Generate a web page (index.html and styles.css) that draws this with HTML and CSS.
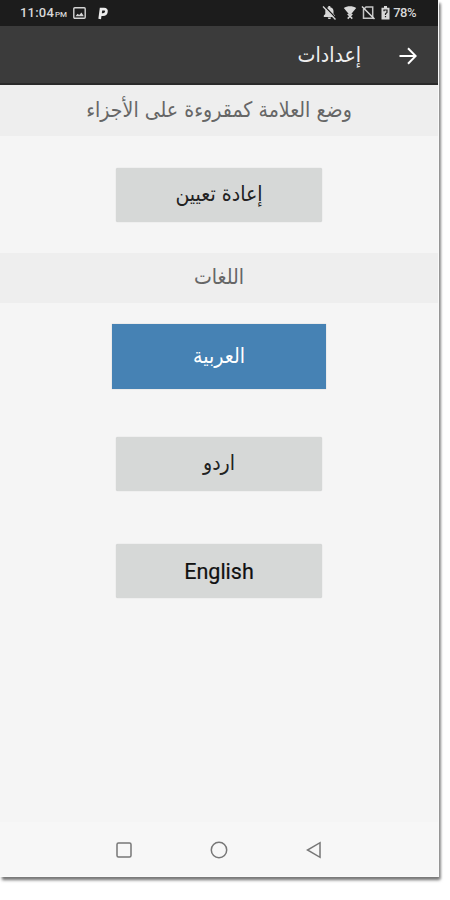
FILE: index.html
```
<!DOCTYPE html>
<html lang="ar">
<head>
<meta charset="utf-8">
<title>إعدادات</title>
<link rel="stylesheet" href="styles.css">
</head>
<body>
<div class="phone">
  <div class="status">
    <span class="time">11:04</span><span class="pm">PM</span>
    <svg class="pic" width="13" height="12" viewBox="0 0 13 12"><rect x=".8" y=".8" width="11.4" height="10.4" rx="1" fill="none" stroke="#d4d4d4" stroke-width="1.4"/><path d="M2.500 9.200l2-2.500 1.700 1.300L8.500 5.500l2.300 3.700z" fill="#d4d4d4"/></svg>
    <svg class="logo" width="12" height="14" viewBox="0 0 12 14"><path d="M2.700 13L4 3.200h3c2 0 2.700 1 2.400 2.500C9.100 7.700 8 8.600 6 8.600H4" fill="none" stroke="#ececec" stroke-width="2.700"/></svg>
    <span class="space"></span>
    <svg class="bell" width="15" height="15" viewBox="0 0 15 15"><path d="M1.800 12V10.500L3.300 9V6c0-2 1.200-3.400 3-3.800V1h2v1.200C10.300 2.600 11.500 4 11.500 6v3l1.500 1.500V12zM5.800 12.500h3.200c0 2-3.200 2-3.200 0z" fill="#d8d8d8"/><path d="M2.500 1.300l12 12.500" stroke="#1c1c1c" stroke-width="1.500"/><path d="M1 1.500l12.500 13" stroke="#d8d8d8" stroke-width="1.300"/></svg>
    <svg class="wifi" width="14" height="15" viewBox="0 0 14 15"><path d="M.8 3C4 .5 10 .5 13.200 3L7 10.500z" fill="#d8d8d8"/><path d="M4.700 9l4.600 4.600M9.300 9l-4.600 4.600" stroke="#d8d8d8" stroke-width="1.500"/></svg>
    <svg class="sim" width="14" height="15" viewBox="0 0 14 15"><path d="M5 2h6.700v11.300H2.500V4.500z" fill="none" stroke="#c4c4c4" stroke-width="1.500"/><path d="M1 1.500l12.500 12.500" stroke="#d8d8d8" stroke-width="1.500"/></svg>
    <svg class="batt" width="9" height="14" viewBox="0 0 9 14"><path d="M3 0h3v1.700h2.500V13.500H.5V1.700H3z" fill="#d8d8d8"/><path d="M3 5.200V4h3v2.500L4.500 7.700V9M4.500 10v1.300" fill="none" stroke="#222" stroke-width="1.200"/></svg>
    <span class="pct">78%</span>
  </div>
  <div class="bar">
    <span class="title ar" dir="rtl">إعدادات</span>
    <svg width="18" height="18" viewBox="0 0 18 18"><path d="M.5 9h16M9 1.300L16.700 9 9 16.700" fill="none" stroke="#fff" stroke-width="2"/></svg>
  </div>
  <div class="section first"><span class="ar" dir="rtl">وضع العلامة كمقروءة على الأجزاء</span></div>
  <div class="btn reset"><span class="ar" dir="rtl">إعادة تعيين</span></div>
  <div class="section"><span class="ar" dir="rtl">اللغات</span></div>
  <div class="btn active"><span class="ar" dir="rtl">العربية</span></div>
  <div class="btn urdu"><span class="ar" dir="rtl">اردو</span></div>
  <div class="btn english"><span>English</span></div>
  <div class="nav">
    <svg width="16" height="16" viewBox="0 0 16 16"><rect x="1" y="1" width="14" height="14" rx="1.500"/></svg>
    <svg width="18" height="18" viewBox="0 0 18 18"><circle cx="9" cy="9" r="7.700"/></svg>
    <svg width="16" height="18" viewBox="0 0 16 18"><path d="M14 1.700v14.600L1.500 9z"/></svg>
  </div>
</div>
</body>
</html>
```
FILE: styles.css
```
* { box-sizing: border-box; }
body { margin: 0; min-height: 900px; background: #fff; font-family: Roboto, "DejaVu Sans", sans-serif; }
.phone { width: 438px; height: 876px; background: #f5f5f5; display: flex; flex-direction: column; align-items: center; box-shadow: 0 0 0 1px #fafafa, 2px 4px 3px 0 #777, 3px 3px 2px 0 #c4c4c4; }
.status { width: 100%; height: 26px; background: #1c1c1c; color: #d8d8d8; display: flex; align-items: center; padding: 0 22px 1px 20px; font-size: 13px; flex: none; }
.time { letter-spacing: .2px; font-weight: 500; }
.pm { font-size: 8px; font-weight: 500; margin: 4px 0 0 1px; }
.pic { margin-left: 6px; }
.logo { margin-left: 11px; }
.space { flex: 1; }
.wifi { margin-left: 6px; }
.sim { margin-left: 4px; }
.batt { margin-left: 6px; }
.pct { margin-left: 3px; font-size: 13px; font-weight: 500; letter-spacing: -.5px; }
.bar { width: 100%; height: 59px; flex: none; background: #3b3b3b; border-bottom: 2px solid #292929; display: flex; justify-content: flex-end; align-items: center; gap: 38px; padding: 2px 21px 0 0; color: #eee; }
.ar { font-family: "DejaVu Sans", sans-serif; white-space: nowrap; display: block; font-size: 19px; line-height: 24px; transform: translateY(-1.5px) scaleY(1.12); }
.section { width: 100%; height: 50px; flex: none; background: #eee; color: #666; display: flex; justify-content: center; align-items: center; }
.first { height: 51px; }
.btn { width: 206px; height: 54px; flex: none; background: #d6d8d7; color: #222; border-radius: 2px; box-shadow: 0 0 1px #bbb; display: flex; align-items: center; justify-content: center; }
.reset { margin: 32px 0 31px; }
.active { width: 214px; height: 65px; margin-top: 21px; background: #4682b4; color: #fff; border-radius: 0; }
.urdu { margin-top: 48px; }
.english { margin-top: 53px; color: #111; font-size: 21.5px; -webkit-text-stroke: .2px #111; }
.nav { width: 100%; height: 54px; margin-top: auto; flex: none; background: #f7f7f7; display: flex; align-items: center; justify-content: center; gap: 78px; }
.nav svg { fill: none; stroke: #777; stroke-width: 1.5; position: relative; top: .5px; }
```
